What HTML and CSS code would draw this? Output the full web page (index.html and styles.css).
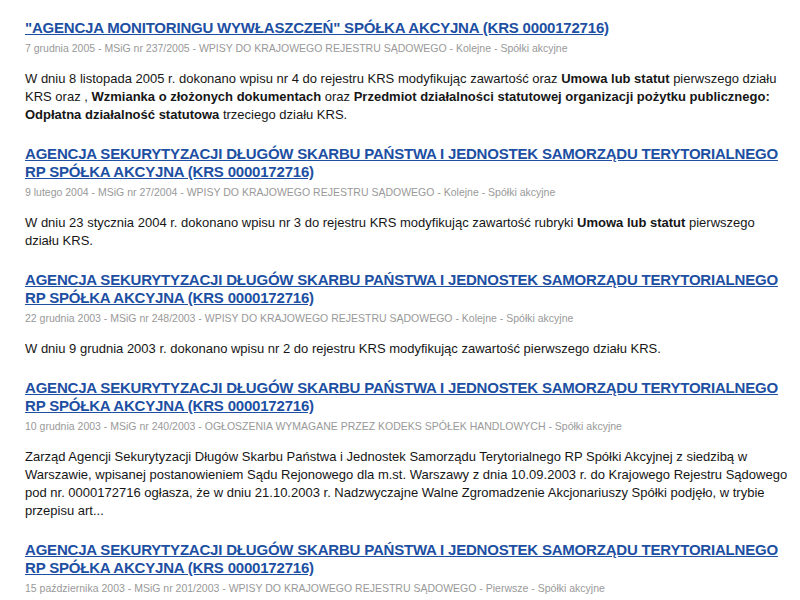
FILE: index.html
```html
<!DOCTYPE html>
<html lang="pl">
<head>
    <meta charset="UTF-8">
    <title>Ogłoszenia MSiG</title>
    <link rel="stylesheet" href="styles.css">
</head>
<body>
    <div class="results">
        <!-- 2005 -->
        <div class="item">
            <h2><a href="#">"AGENCJA MONITORINGU WYWŁASZCZEŃ" SPÓŁKA AKCYJNA (KRS 0000172716)</a></h2>
            <p class="meta">7 grudnia 2005 - MSiG nr 237/2005 - WPISY DO KRAJOWEGO REJESTRU SĄDOWEGO - Kolejne - Spółki akcyjne</p>
            <p class="text">W dniu 8 listopada 2005 r. dokonano wpisu nr 4 do rejestru KRS modyfikując zawartość oraz <b>Umowa lub statut</b> pierwszego działu KRS oraz , <b>Wzmianka o złożonych dokumentach</b> oraz <b>Przedmiot działalności statutowej organizacji pożytku publicznego: Odpłatna działalność statutowa</b> trzeciego działu KRS.</p>
        </div>

        <div class="item">
            <h2><a href="#">AGENCJA SEKURYTYZACJI DŁUGÓW SKARBU PAŃSTWA I JEDNOSTEK SAMORZĄDU TERYTORIALNEGO RP SPÓŁKA AKCYJNA (KRS 0000172716)</a></h2>
            <p class="meta">9 lutego 2004 - MSiG nr 27/2004 - WPISY DO KRAJOWEGO REJESTRU SĄDOWEGO - Kolejne - Spółki akcyjne</p>
            <p class="text">W dniu 23 stycznia 2004 r. dokonano wpisu nr 3 do rejestru KRS modyfikując zawartość rubryki <b>Umowa lub statut</b> pierwszego działu KRS.</p>
        </div>

        <div class="item">
            <h2><a href="#">AGENCJA SEKURYTYZACJI DŁUGÓW SKARBU PAŃSTWA I JEDNOSTEK SAMORZĄDU TERYTORIALNEGO RP SPÓŁKA AKCYJNA (KRS 0000172716)</a></h2>
            <p class="meta">22 grudnia 2003 - MSiG nr 248/2003 - WPISY DO KRAJOWEGO REJESTRU SĄDOWEGO - Kolejne - Spółki akcyjne</p>
            <p class="text">W dniu 9 grudnia 2003 r. dokonano wpisu nr 2 do rejestru KRS modyfikując zawartość pierwszego działu KRS.</p>
        </div>

        <div class="item">
            <h2><a href="#">AGENCJA SEKURYTYZACJI DŁUGÓW SKARBU PAŃSTWA I JEDNOSTEK SAMORZĄDU TERYTORIALNEGO RP SPÓŁKA AKCYJNA (KRS 0000172716)</a></h2>
            <p class="meta">10 grudnia 2003 - MSiG nr 240/2003 - OGŁOSZENIA WYMAGANE PRZEZ KODEKS SPÓŁEK HANDLOWYCH - Spółki akcyjne</p>
            <p class="text">Zarząd Agencji Sekurytyzacji Długów Skarbu Państwa i Jednostek Samorządu Terytorialnego RP Spółki Akcyjnej z siedzibą w Warszawie, wpisanej postanowieniem Sądu Rejonowego dla m.st. Warszawy z dnia 10.09.2003 r. do Krajowego Rejestru Sądowego pod nr. 0000172716 ogłasza, że w dniu 21.10.2003 r. Nadzwyczajne Walne Zgromadzenie Akcjonariuszy Spółki podjęło, w trybie przepisu art...</p>
        </div>

        <div class="item">
            <h2><a href="#">AGENCJA SEKURYTYZACJI DŁUGÓW SKARBU PAŃSTWA I JEDNOSTEK SAMORZĄDU TERYTORIALNEGO RP SPÓŁKA AKCYJNA (KRS 0000172716)</a></h2>
            <p class="meta">15 października 2003 - MSiG nr 201/2003 - WPISY DO KRAJOWEGO REJESTRU SĄDOWEGO - Pierwsze - Spółki akcyjne</p>
        </div>
    </div>
</body>
</html>
```

FILE: styles.css
```css
body {
    font-family: "Liberation Sans", Arial, sans-serif;
    margin: 0;
    padding: 0;
    background: #fff;
    color: #161616;
}

.results {
    padding: 19px 8px 0 25px;
}

.item {
    margin-bottom: 21px;
}

/* Title link */
.item h2 {
    margin: 0;
    font-size: 15px;
    line-height: 18px;
    font-weight: bold;
    letter-spacing: -0.2px;
}

.item h2 a {
    color: #1d4fa3;
    text-decoration: underline;
}

.meta {
    margin: 4px 0 0;
    font-size: 10.5px;
    line-height: 14px;
    color: #999;
}

.text {
    margin: 15px 0 0;
    font-size: 13px;
    line-height: 18px;
}
```
